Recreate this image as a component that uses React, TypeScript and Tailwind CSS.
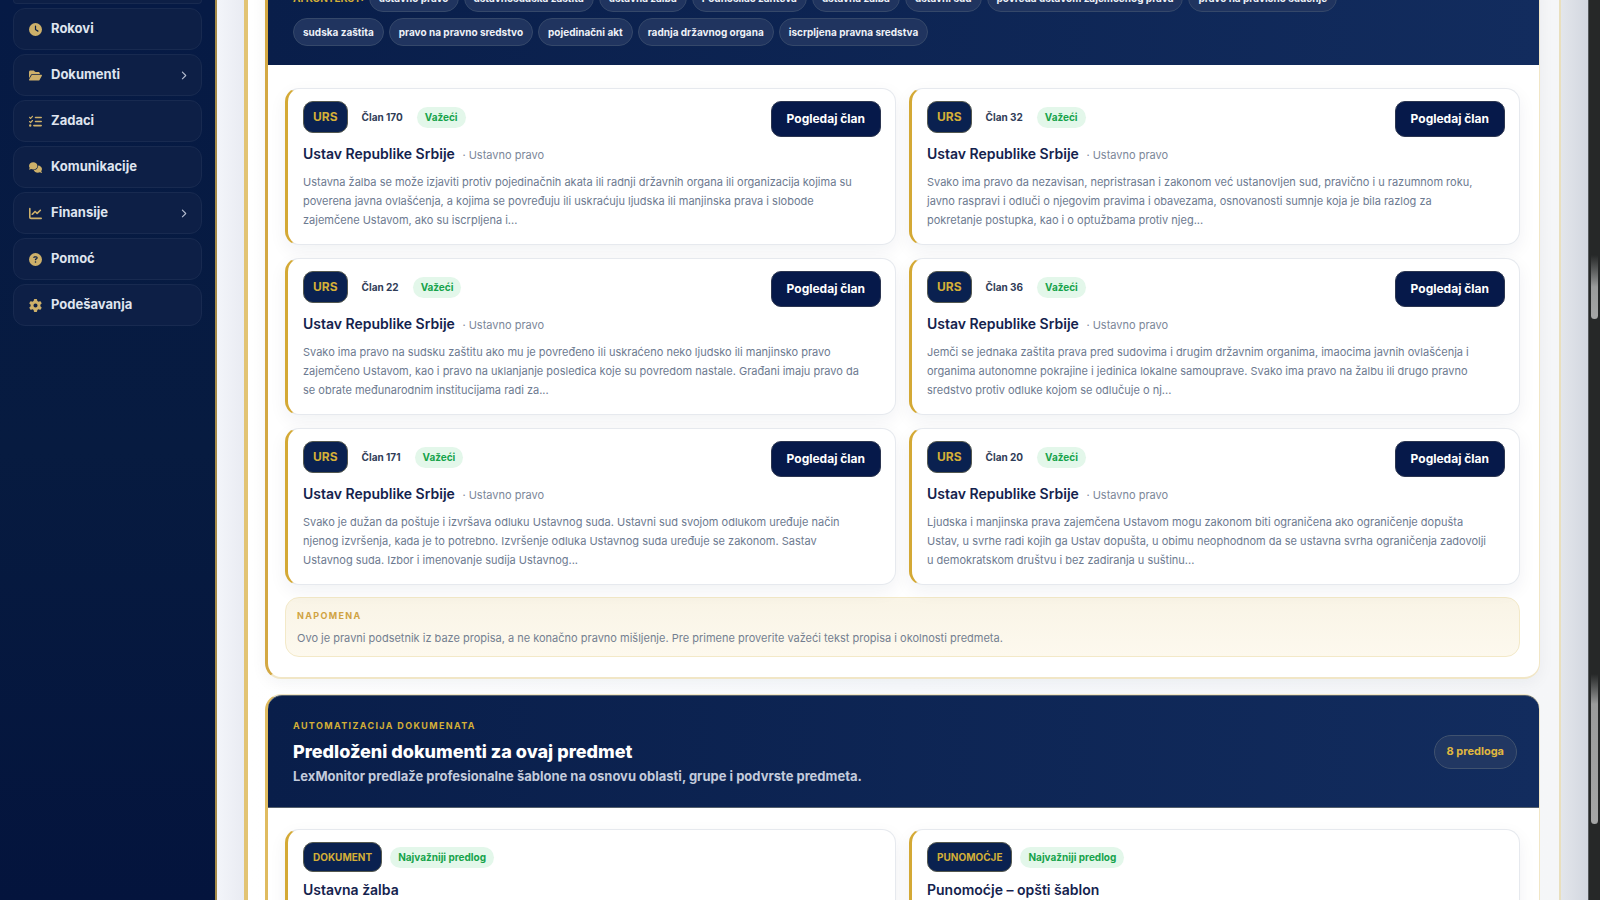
import React from "react";
import { FaClock, FaFolderOpen, FaListCheck, FaComments, FaChartLine, FaCircleQuestion, FaGear, FaChevronRight } from "react-icons/fa6";

type NavItem = { label: string; icon: React.ReactNode; expandable?: boolean };

const navItems: NavItem[] = [
  { label: "Rokovi", icon: <FaClock /> },
  { label: "Dokumenti", icon: <FaFolderOpen />, expandable: true },
  { label: "Zadaci", icon: <FaListCheck /> },
  { label: "Komunikacije", icon: <FaComments /> },
  { label: "Finansije", icon: <FaChartLine />, expandable: true },
  { label: "Pomoć", icon: <FaCircleQuestion /> },
  { label: "Podešavanja", icon: <FaGear /> },
];

const contextRows = [
  [
    "ustavno pravo",
    "ustavnosudska zaštita",
    "ustavna žalba",
    "Podnosilac zahteva",
    "ustavna žalba",
    "ustavni sud",
    "povreda ustavom zajemčenog prava",
    "pravo na pravično suđenje",
  ],
  ["sudska zaštita", "pravo na pravno sredstvo", "pojedinačni akt", "radnja državnog organa", "iscrpljena pravna sredstva"],
];

const articles = [
  {
    no: 170,
    lines: [
      "Ustavna žalba se može izjaviti protiv pojedinačnih akata ili radnji državnih organa ili organizacija kojima su",
      "poverena javna ovlašćenja, a kojima se povređuju ili uskraćuju ljudska ili manjinska prava i slobode",
      "zajemčene Ustavom, ako su iscrpljena i...",
    ],
  },
  {
    no: 32,
    lines: [
      "Svako ima pravo da nezavisan, nepristrasan i zakonom već ustanovljen sud, pravično i u razumnom roku,",
      "javno raspravi i odluči o njegovim pravima i obavezama, osnovanosti sumnje koja je bila razlog za",
      "pokretanje postupka, kao i o optužbama protiv njeg...",
    ],
  },
  {
    no: 22,
    lines: [
      "Svako ima pravo na sudsku zaštitu ako mu je povređeno ili uskraćeno neko ljudsko ili manjinsko pravo",
      "zajemčeno Ustavom, kao i pravo na uklanjanje posledica koje su povredom nastale. Građani imaju pravo da",
      "se obrate međunarodnim institucijama radi za...",
    ],
  },
  {
    no: 36,
    lines: [
      "Jemči se jednaka zaštita prava pred sudovima i drugim državnim organima, imaocima javnih ovlašćenja i",
      "organima autonomne pokrajine i jedinica lokalne samouprave. Svako ima pravo na žalbu ili drugo pravno",
      "sredstvo protiv odluke kojom se odlučuje o nj...",
    ],
  },
  {
    no: 171,
    lines: [
      "Svako je dužan da poštuje i izvršava odluku Ustavnog suda. Ustavni sud svojom odlukom uređuje način",
      "njenog izvršenja, kada je to potrebno. Izvršenje odluka Ustavnog suda uređuje se zakonom. Sastav",
      "Ustavnog suda. Izbor i imenovanje sudija Ustavnog...",
    ],
  },
  {
    no: 20,
    lines: [
      "Ljudska i manjinska prava zajemčena Ustavom mogu zakonom biti ograničena ako ograničenje dopušta",
      "Ustav, u svrhe radi kojih ga Ustav dopušta, u obimu neophodnom da se ustavna svrha ograničenja zadovolji",
      "u demokratskom društvu i bez zadiranja u suštinu...",
    ],
  },
];

const templates = [
  { kind: "DOKUMENT", title: "Ustavna žalba" },
  { kind: "PUNOMOĆJE", title: "Punomoćje – opšti šablon" },
];

const card =
  "rounded-[14px] border border-l-[3px] border-[#e6e9ee] border-l-[#d4a935] bg-white shadow-[0_6px_18px_rgba(15,30,60,0.06)]";

function NavButton({ item }: { item: NavItem }) {
  return (
    <button
      type="button"
      className="flex h-[42px] w-full shrink-0 items-center gap-2 rounded-xl border border-[#182a50] bg-[#0d1f46] px-[13px] text-left text-[13px] font-bold text-[#dfe4ef]"
    >
      <span className="flex w-4 justify-center text-[13px] text-[#cdb06a]">{item.icon}</span>
      <span className="flex-1">{item.label}</span>
      {item.expandable && <FaChevronRight className="text-[9px] text-[#b4bdd0]" />}
    </button>
  );
}

function Chip({ children }: { children: React.ReactNode }) {
  return (
    <span className="flex h-7 shrink-0 items-center whitespace-nowrap rounded-full border border-[#35486a] bg-[#20345f] px-[9px] text-[10px] font-bold text-[#eef1f7]">
      {children}
    </span>
  );
}

function Status({ children }: { children: React.ReactNode }) {
  return (
    <span className="flex h-[21px] items-center rounded-full bg-[#e3f7ea] px-2 text-[10px] font-bold text-[#16a34a]">
      {children}
    </span>
  );
}

function ArticleCard({ no, lines }: { no: number; lines: string[] }) {
  return (
    <article className={`${card} h-[157px] pl-[15px] pr-[14px] pt-3`}>
      <div className="flex items-start justify-between">
        <div className="flex h-8 items-center">
          <span className="flex h-8 items-center rounded-[10px] border border-[#54584f] bg-[#0a2150] px-[9px] text-xs font-bold text-[#d4af37]">
            URS
          </span>
          <span className="mx-3.5 text-[10px] font-bold text-[#2f3c57]">Član {no}</span>
          <Status>Važeći</Status>
        </div>
        <button type="button" className="h-9 rounded-[10px] border border-[#2b3550] bg-[#06194a] px-[15px] text-xs font-bold text-white">
          Pogledaj član
        </button>
      </div>
      <h3 className="mt-[7px] text-sm leading-5 font-semibold text-[#14224d]">
        Ustav Republike Srbije <span className="ml-1 text-[11px] font-normal text-[#7c8799]">· Ustavno pravo</span>
      </h3>
      <p className="mt-2 text-[11px] leading-[19px] text-[#6d7a90]">
        {lines.map((line) => (
          <span key={line} className="block">
            {line}{" "}
          </span>
        ))}
      </p>
    </article>
  );
}

export default function App() {
  return (
    <div className="flex h-screen overflow-hidden bg-[#f1f3f8] font-['Inter',sans-serif]">
      <aside className="w-[217px] shrink-0 border-r-2 border-[#a48a48] bg-linear-to-b from-[#061a45] via-[#071b40] to-[#04143d]">
        <nav className="flex flex-col gap-1 px-[13px]">
          <div className="h-1 rounded-b-xl border border-t-0 border-[#182a50] bg-[#0d1f46]" />
          {navItems.map((item) => (
            <NavButton key={item.label} item={item} />
          ))}
        </nav>
      </aside>

      <main className="flex min-w-0 flex-1">
        <div className="w-[27px] shrink-0 bg-linear-to-r from-[#f3f5fa] to-[#e9ebf2]" />
        <div className="min-w-0 flex-1 border-l-4 border-r-2 border-[#e9dfbd] border-l-[#e2c373] bg-linear-to-r from-white via-[#f7f9fc] to-[#f5f6f8] pl-[17px] pr-[19px]">
          <section className="rounded-b-2xl border border-t-0 border-l-[3px] border-b-2 border-[#f1e6c6] border-l-[#d3a843] bg-white shadow-[0_4px_16px_rgba(15,30,60,0.05)]">
            <header className="-mt-4 flex flex-col gap-1.5 bg-linear-to-r from-[#091e4a] to-[#122c5e] px-[25px] pb-[19px]">
              {contextRows.map((row, i) => (
                <div key={i} className="flex items-center gap-[5px]">
                  {i === 0 && <span className="text-[10px] font-bold text-[#d4af37]">AI KONTEKST:</span>}
                  {row.map((chip, j) => (
                    <Chip key={j}>{chip}</Chip>
                  ))}
                </div>
              ))}
            </header>
            <div className="pt-[23px] pr-[19px] pb-5 pl-[17px]">
              <div className="grid grid-cols-2 gap-[13px]">
                {articles.map((a) => (
                  <ArticleCard key={a.no} {...a} />
                ))}
              </div>
              <div className="mt-3 h-[60px] rounded-[14px] border border-[#f3e9c8] bg-linear-to-b from-[#f9f4e6] to-[#fdf9ee] px-[11px] pt-2.5">
                <h4 className="text-[9px] leading-4 font-bold tracking-[0.15em] text-[#d0a343]">NAPOMENA</h4>
                <p className="mt-1 text-[11px] leading-5 text-[#747f90]">
                  Ovo je pravni podsetnik iz baze propisa, a ne konačno pravno mišljenje. Pre primene proverite važeći tekst propisa i okolnosti predmeta.
                </p>
              </div>
            </div>
          </section>

          <section className="mt-[15px] rounded-t-2xl border border-l-[3px] border-[#f1e6c6] border-l-[#dfbb60] bg-white">
            <header className="flex h-[113px] items-center justify-between rounded-t-[14px] border-y border-[#55606c] bg-linear-to-r from-[#091e4a] to-[#122c5e] pl-[25px] pr-[22px]">
              <div>
                <p className="text-[9px] leading-4 font-bold tracking-[0.15em] text-[#d4af37]">AUTOMATIZACIJA DOKUMENATA</p>
                <h2 className="mt-1 text-lg leading-7 font-extrabold text-white">Predloženi dokumenti za ovaj predmet</h2>
                <p className="text-[13px] leading-5 font-bold text-[#c3cbdc]">
                  LexMonitor predlaže profesionalne šablone na osnovu oblasti, grupe i podvrste predmeta.
                </p>
              </div>
              <span className="flex h-[34px] items-center rounded-full border border-[#40526f] bg-[#213762] px-3 text-[11px] font-bold text-[#e0b83f]">
                8 predloga
              </span>
            </header>
            <div className="grid grid-cols-2 gap-[13px] pt-[21px] pr-[19px] pl-[17px]">
              {templates.map((t) => (
                <article key={t.kind} className={`${card} h-[157px] pl-[15px] pt-3`}>
                  <div className="flex items-center gap-2">
                    <span className="flex h-[30px] items-center rounded-[10px] border border-[#54584f] bg-[#0a2150] px-[9px] text-[10px] font-bold text-[#d4af37]">
                      {t.kind}
                    </span>
                    <Status>Najvažniji predlog</Status>
                  </div>
                  <h3 className="mt-2 text-sm leading-5 font-semibold text-[#14224d]">{t.title}</h3>
                </article>
              ))}
            </div>
          </section>
        </div>
        <div className="w-[27px] shrink-0 bg-linear-to-r from-[#e3e6eb] to-[#d3d7e0]" />
      </main>
      <div className="flex w-3 shrink-0 flex-col items-center border-l border-[#55585c] bg-[#262828] pt-[255px]">
        <div className="h-16 w-[7px] shrink-0 rounded-b bg-linear-to-b from-[#262828] via-[#9a9b9b] to-[#a5a6a6]" />
        <div className="mt-[355px] h-[150px] w-[7px] shrink-0 rounded-b bg-linear-to-b from-[#262828] via-[#9a9b9b] via-20% to-[#a5a6a6]" />
      </div>
    </div>
  );
}
